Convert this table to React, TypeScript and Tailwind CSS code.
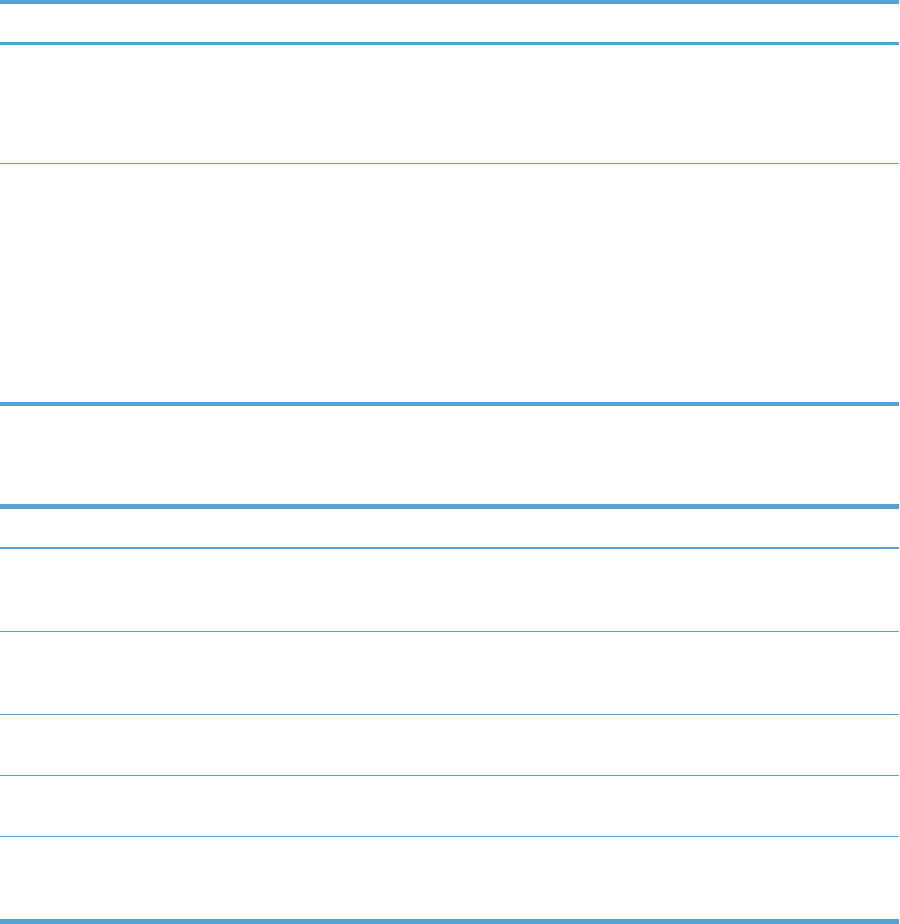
// heights are border-box: a row's height includes its bottom rule
const tables = [
  {
    top: 'border-t-[4px]',
    bottom: 'border-b-[4px]',
    head: 'h-[41px] border-b-[3px]',
    rows: ['h-[119px]', 'h-[238px]'],
  },
  {
    top: 'border-t-[5px]',
    bottom: 'border-b-[5px]',
    head: 'h-[40px] border-b-[2px]',
    rows: ['h-[83px]', 'h-[83px]', 'h-[61px]', 'h-[61px]', 'h-[82px]'],
  },
];

function Table({ top, bottom, head, rows }: (typeof tables)[number]) {
  return (
    <div className={`w-[899px] border-[#58a1d4] ${top} ${bottom}`}>
      <div className={`border-[#58a1d4] ${head}`} />
      {rows.map((h, i) => (
        <div
          key={i}
          className={`${h} ${i < rows.length - 1 ? 'border-b border-[#5b9ecf]' : ''}`}
        />
      ))}
    </div>
  );
}

export default function App() {
  return (
    <div className="w-[900px] h-[924px] bg-white font-['Liberation_Sans',sans-serif] overflow-hidden">
      <Table {...tables[0]} />
      <div className="h-[98px]" />
      <Table {...tables[1]} />
    </div>
  );
}
